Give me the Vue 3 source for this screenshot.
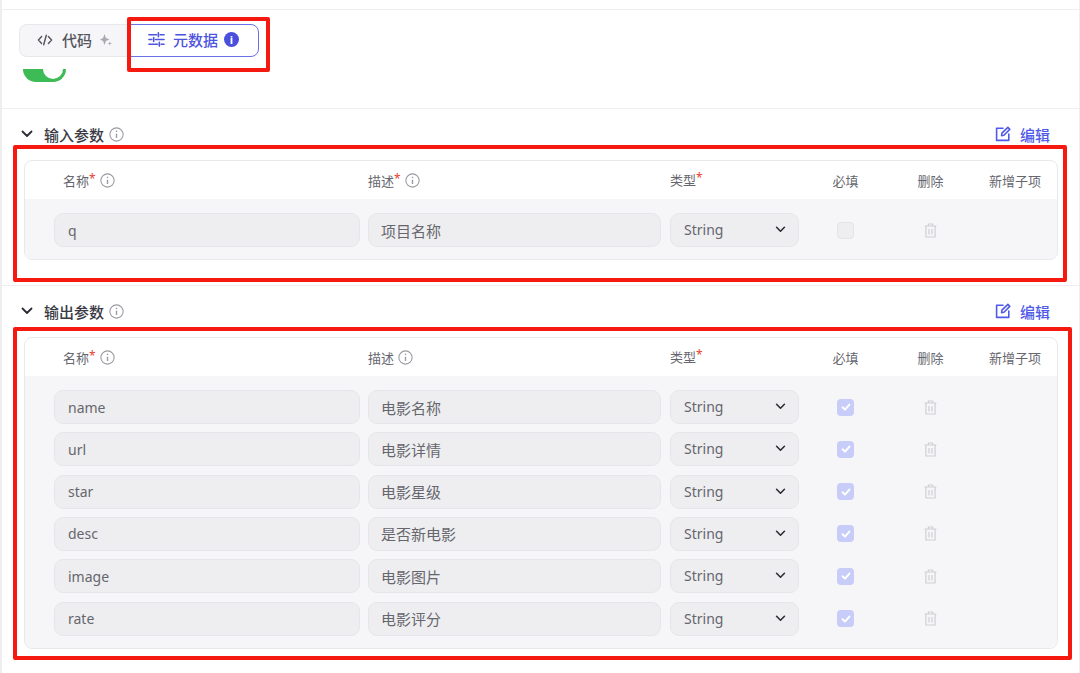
<template>
  <div class="page">
    <div class="tabs-area">
      <div class="tabs">
        <div class="tab">
          <svg class="tab-code" viewBox="0 0 16 16" fill="none" stroke="currentColor" stroke-width="1.4" stroke-linecap="round" stroke-linejoin="round">
            <path d="M4.6 4.6 1.4 8l3.2 3.4M11.4 4.6 14.6 8l-3.2 3.4M9.3 3.2 6.7 12.8" />
          </svg>
          <span>代码</span>
          <svg class="tab-spark" viewBox="0 0 12 12" fill="currentColor">
            <path d="M4.5 0 5.9 4.1 9.5 5.5 5.9 6.9 4.5 11 3.1 6.9 0 5.5l3.1-1.4zM9.8 7.4l.6 1.5 1.6.6-1.6.6-.6 1.5-.6-1.5-1.6-.6 1.6-.6z" />
          </svg>
        </div>
        <div class="tab active">
          <svg class="tab-sliders" viewBox="0 0 18 18" fill="none" stroke="currentColor" stroke-width="1.7" stroke-linecap="round">
            <path d="M1 4h8M13 4h4M11 2v4M1 9h3M8 9h9M6 7v4M1 14h9M14 14h3M12 12v4" />
          </svg>
          <span>元数据</span>
          <span class="info-solid">i</span>
        </div>
      </div>
      <div class="switch-clip"><div class="switch"><i></i></div></div>
    </div>

    <section v-for="sec in sections" :key="sec.title" class="section" :class="sec.cls">
      <div class="section-head">
        <svg class="caret" viewBox="0 0 12 8" fill="none" stroke="currentColor" stroke-width="1.8" stroke-linecap="round" stroke-linejoin="round">
          <path d="M1.5 1.5 6 6l4.5-4.5" />
        </svg>
        <h3>{{ sec.title }}</h3>
        <svg class="info" viewBox="0 0 14 14" fill="none" stroke="currentColor">
          <circle cx="7" cy="7" r="6.2" />
          <path d="M7 6.2v4" stroke-width="1.3" />
          <path d="M7 3.4v1.3" stroke-width="1.3" />
        </svg>
        <a class="edit">
          <svg viewBox="0 0 16 16" fill="none" stroke="currentColor" stroke-width="1.6" stroke-linecap="round" stroke-linejoin="round">
            <path d="M8 2.2H1.6v12.2h12.2V8M6.6 9.6l.3-2.4 6-5.8 1.9 2-5.9 5.9z" />
          </svg>
          编辑
        </a>
      </div>

      <div class="card">
        <div class="grid card-head">
          <div class="col-name">名称<em>*</em>
            <svg class="info small" viewBox="0 0 14 14" fill="none" stroke="currentColor">
              <circle cx="7" cy="7" r="6.2" />
              <path d="M7 6.2v4M7 3.4v1.3" stroke-width="1.3" />
            </svg>
          </div>
          <div class="col-desc">描述<em v-if="sec.descRequired">*</em>
            <svg class="info small" viewBox="0 0 14 14" fill="none" stroke="currentColor">
              <circle cx="7" cy="7" r="6.2" />
              <path d="M7 6.2v4M7 3.4v1.3" stroke-width="1.3" />
            </svg>
          </div>
          <div class="col-type">类型<em>*</em></div>
          <div class="center">必填</div>
          <div class="center">删除</div>
          <div class="center col-add">新增子项</div>
        </div>

        <div class="card-body">
          <div v-for="row in sec.rows" :key="row.name" class="grid row">
            <input class="field" :value="row.name" readonly />
            <input class="field cjk" :value="row.desc" readonly />
            <div class="field select">
              String
              <svg viewBox="0 0 12 8" fill="none" stroke="currentColor" stroke-width="1.8" stroke-linecap="round" stroke-linejoin="round">
                <path d="M1.5 1.5 6 6l4.5-4.5" />
              </svg>
            </div>
            <div class="center">
              <span class="check" :class="{ on: row.required }">
                <svg v-if="row.required" viewBox="0 0 12 12" fill="none" stroke="#fff" stroke-width="2" stroke-linecap="round" stroke-linejoin="round">
                  <path d="M2.6 6.2 5 8.6l4.4-5" />
                </svg>
              </span>
            </div>
            <div class="center">
              <svg class="trash" viewBox="0 0 13 15" fill="none" stroke="currentColor" stroke-width="1.2">
                <path d="M.6 3h11.8M4.4 3V1h4.2v2M1.9 3v11h9.2V3M5 6v5.4M8 6v5.4" />
              </svg>
            </div>
            <div></div>
          </div>
        </div>
      </div>
    </section>

    <!-- 红色标注框 -->
    <div class="mark mark-tab"></div>
    <div class="mark mark-input"></div>
    <div class="mark mark-output"></div>
  </div>
</template>

<script setup>
const sections = [
  {
    title: '输入参数',
    cls: 'input-sec',
    descRequired: true,
    rows: [{ name: 'q', desc: '项目名称', required: false }],
  },
  {
    title: '输出参数',
    cls: 'output-sec',
    descRequired: false,
    rows: [
      { name: 'name', desc: '电影名称', required: true },
      { name: 'url', desc: '电影详情', required: true },
      { name: 'star', desc: '电影星级', required: true },
      { name: 'desc', desc: '是否新电影', required: true },
      { name: 'image', desc: '电影图片', required: true },
      { name: 'rate', desc: '电影评分', required: true },
    ],
  },
];
</script>

<style>
html, body {
  margin: 0;
  background: #fff;
}
</style>

<style scoped>
.page {
  position: relative;
  box-sizing: border-box;
  width: 1080px;
  height: 673px;
  overflow: hidden;
  padding-top: 9px;
  border-left: 2px solid #eeeef0;
  border-right: 1px solid #eeeef0;
  background: #fff;
  font-family: "Noto Sans", "Noto Sans CJK SC", sans-serif;
  color: #4a4a55;
}
.tabs-area {
  box-sizing: border-box;
  height: 100px;
  padding: 14px 0 0 17px;
  border-top: 1px solid #eeeef0;
  border-bottom: 1px solid #eeeef0;
}
.tabs {
  display: flex;
  height: 33px;
}
.tab {
  box-sizing: border-box;
  display: flex;
  align-items: center;
  width: 111px;
  padding: 0 0 2px 17px;
  border: 1px solid #e8e8ec;
  border-right: none;
  border-radius: 8px 0 0 8px;
  background: #f6f6f8;
  font-size: 15px;
  font-weight: 500;
  color: #55555f;
}
.tab-code {
  width: 16px;
  height: 16px;
  margin-right: 9px;
}
.tab-spark {
  width: 12px;
  height: 12px;
  margin-left: 8px;
  color: #a9a9b2;
}
.tab.active {
  width: 129px;
  padding-left: 17px;
  border: 1px solid #6a70ea;
  border-radius: 0 8px 8px 0;
  background: #fff;
  color: #4e53e0;
}
.tab-sliders {
  width: 17px;
  height: 17px;
  margin-right: 8px;
}
.info-solid {
  width: 15px;
  height: 15px;
  margin-left: 6px;
  border-radius: 50%;
  background: #4a50dc;
  color: #fff;
  font-size: 11px;
  font-weight: 700;
  line-height: 15px;
  text-align: center;
}
.switch-clip {
  height: 13px;
  margin: 12px 0 0 4px;
  width: 43px;
  overflow: hidden;
}
.switch {
  position: relative;
  width: 43px;
  height: 26px;
  margin-top: -13px;
  border-radius: 13px;
  background: #3dbb55;
}
.switch i {
  position: absolute;
  right: 3px;
  top: 3px;
  width: 20px;
  height: 20px;
  border-radius: 50%;
  background: #fff;
}
.section-head {
  display: flex;
  align-items: center;
  height: 24px;
  padding: 0 29px 0 19px;
}
.input-sec {
  box-sizing: border-box;
  height: 177px;
  padding-top: 13px;
  border-bottom: 1px solid #eeeef0;
}
.output-sec {
  padding-top: 13px;
}
.caret {
  width: 12px;
  height: 8px;
  margin-right: 11px;
  color: #2c2c34;
}
.section-head h3 {
  margin: 0;
  font-size: 15px;
  font-weight: 500;
  color: #3a3a44;
}
.info {
  width: 15px;
  height: 15px;
  margin-left: 5px;
  color: #9a9aa2;
}
.info.small {
  margin-left: 4px;
  vertical-align: -2px;
}
.edit {
  display: flex;
  align-items: center;
  margin-left: auto;
  font-size: 15px;
  font-weight: 500;
  color: #4f5ae8;
}
.edit svg {
  width: 16px;
  height: 16px;
  margin-right: 9px;
}
.card {
  box-sizing: border-box;
  width: 1034px;
  margin: 14px 0 0 22px;
  border: 1px solid #e9e9ed;
  border-radius: 8px;
  overflow: hidden;
}
.grid {
  display: grid;
  grid-template-columns: 306px 293px 130px 77px 77px 1fr;
  column-gap: 8px;
  padding-left: 29px;
  align-items: center;
}
.card-head {
  height: 38px;
  font-size: 13px;
  color: #66666e;
}
.col-name {
  padding-left: 9px;
}
.col-type {
  padding-left: 1px;
  margin-top: -3px;
}
.col-add {
  padding-right: 4px;
}
.center {
  display: flex;
  align-items: center;
  justify-content: center;
}
.card-head em {
  font-style: normal;
  color: #e8402f;
  vertical-align: 3px;
  font-size: 12px;
}
.card-body {
  display: flex;
  flex-direction: column;
  gap: 8.33px;
  padding: 14px 0 12px;
  background: #f6f6f8;
}
.field {
  box-sizing: border-box;
  width: 100%;
  height: 34px;
  padding: 0 13px;
  border: 1px solid #e6e6ea;
  border-radius: 9px;
  outline: none;
  background: #eeeef0;
  font: inherit;
  font-size: 14px;
  color: #66666e;
}
.field.cjk {
  font-size: 15px;
  padding-left: 12px;
}
.select {
  display: flex;
  align-items: center;
  justify-content: space-between;
  width: calc(100% - 1px);
  margin-left: 1px;
  padding-right: 12px;
  padding-bottom: 1px;
}
.select svg {
  width: 11px;
  height: 7px;
  color: #2c2c34;
}
.check {
  display: flex;
  align-items: center;
  justify-content: center;
  box-sizing: border-box;
  width: 17px;
  height: 17px;
  border: 1px solid #e3e3e8;
  border-radius: 4px;
  background: #eeeef0;
}
.check.on {
  border: none;
  background: #c8ccf8;
}
.check svg {
  width: 12px;
  height: 12px;
}
.trash {
  width: 13px;
  height: 15px;
  color: #cfcfd4;
}
.mark {
  position: absolute;
  box-sizing: border-box;
  border: 4px solid #f5190f;
  border-radius: 2px;
  pointer-events: none;
}
.mark-tab {
  left: 125px;
  top: 17px;
  width: 143px;
  height: 55px;
}
.mark-input {
  left: 11px;
  top: 145px;
  width: 1054px;
  height: 137px;
}
.mark-output {
  left: 11px;
  top: 327px;
  width: 1059px;
  height: 333px;
}
</style>
